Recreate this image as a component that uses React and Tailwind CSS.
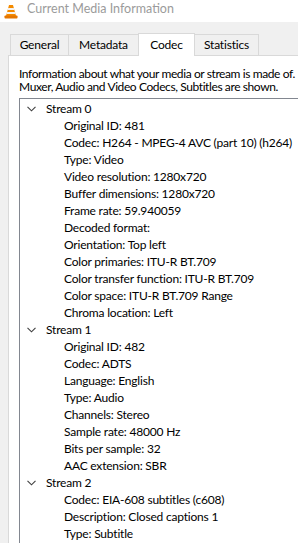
import React from "react";

const streams = [
  {
    name: "Stream 0",
    items: [
      "Original ID: 481",
      "Codec: H264 - MPEG-4 AVC (part 10) (h264)",
      "Type: Video",
      "Video resolution: 1280x720",
      "Buffer dimensions: 1280x720",
      "Frame rate: 59.940059",
      "Decoded format:",
      "Orientation: Top left",
      "Color primaries: ITU-R BT.709",
      "Color transfer function: ITU-R BT.709",
      "Color space: ITU-R BT.709 Range",
      "Chroma location: Left",
    ],
  },
  {
    name: "Stream 1",
    items: [
      "Original ID: 482",
      "Codec: ADTS",
      "Language: English",
      "Type: Audio",
      "Channels: Stereo",
      "Sample rate: 48000 Hz",
      "Bits per sample: 32",
      "AAC extension: SBR",
    ],
  },
  {
    name: "Stream 2",
    items: [
      "Codec: EIA-608 subtitles (c608)",
      "Description: Closed captions 1",
      "Type: Subtitle",
    ],
  },
];

function VlcIcon() {
  return (
    <svg width="14" height="15" viewBox="0 0 14 15">
      <path d="M5 1 L9 1 L12 12 L2 12 Z" fill="#f48b00" />
      <path d="M4.2 4 L9.8 4 L10.4 6 L3.6 6 Z" fill="#f4f4f4" />
      <path d="M3.2 8 L10.8 8 L11.4 10 L2.6 10 Z" fill="#f4f4f4" />
      <rect x="0.5" y="11.5" width="13" height="3" rx="0.8" fill="#e57600" />
    </svg>
  );
}

function Chevron() {
  return (
    <svg width="9" height="6" viewBox="0 0 9 6">
      <path d="M0.5 0.8 L4.5 4.8 L8.5 0.8" fill="none" stroke="#404040" strokeWidth="1.1" />
    </svg>
  );
}

export default function App() {
  const tabs = ["General", "Metadata", "Codec", "Statistics"];
  return (
    <div
      className="w-[298px] h-[543px] overflow-hidden bg-[#f0f0f0] text-[12px] tracking-[-0.2px] text-black"
      style={{ fontFamily: 'Lato, sans-serif' }}
    >
      {/* barra de título */}
      <div className="h-[22px] bg-white flex items-center pl-[4px] gap-[9px]">
        <VlcIcon />
        <span className="text-[#9b9b9b] text-[12.5px] tracking-normal -mt-[4px]">Current Media Information</span>
      </div>

      {/* pestañas */}
      <div className="flex items-end pl-[10px] h-[33px]">
        {tabs.map((t) =>
          t === "Codec" ? (
            <div
              key={t}
              className="h-[23px] -mb-px -ml-px z-10 relative bg-white border border-b-0 border-[#d9d9d9] w-[57px] justify-center flex items-center"
            >
              {t}
            </div>
          ) : (
            <div
              key={t}
              className={
                "h-[21px] bg-[#f0f0f0] border border-b-0 border-[#d9d9d9] -ml-px first:ml-0 justify-center flex items-center " +
                (t === "General" ? "w-[59px]" : t === "Metadata" ? "w-[71px]" : "w-[65px]")
              }
            >
              {t}
            </div>
          )
        )}
      </div>

      {/* panel */}
      <div className="ml-[8px] bg-white border-l border-t border-[#d9d9d9] h-[500px] pt-[11px] pl-[10px]">
        <p className="leading-[13px] whitespace-nowrap tracking-[-0.4px]">
          Information about what your media or stream is made of.
          <br />
          Muxer, Audio and Video Codecs, Subtitles are shown.
        </p>
        <div className="mt-[5px] border-l border-t border-[#828790] h-[460px] pt-px">
          {streams.map((s) => (
            <div key={s.name}>
              <div className="h-[17px] flex items-center pl-[7px] whitespace-nowrap">
                <Chevron />
                <span className="ml-[10px]">{s.name}</span>
              </div>
              {s.items.map((it) => (
                <div key={it} className="h-[17px] flex items-center pl-[44px] whitespace-nowrap">
                  {it}
                </div>
              ))}
            </div>
          ))}
        </div>
      </div>
    </div>
  );
}
